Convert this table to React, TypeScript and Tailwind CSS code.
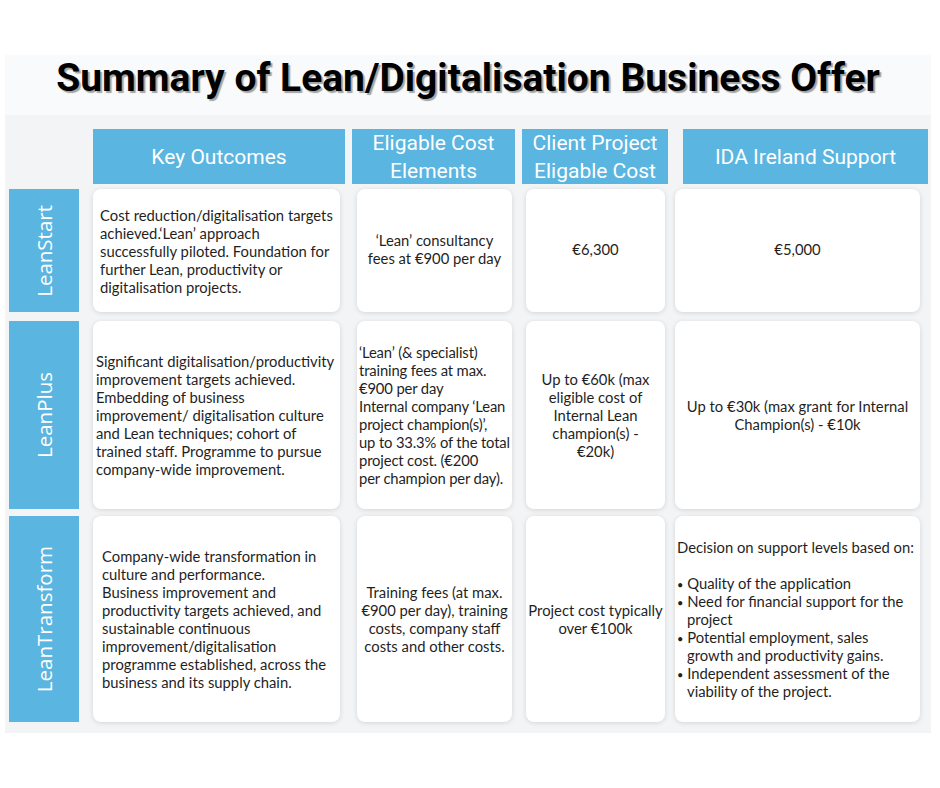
import React from "react"

const body = "font-['Lato','Noto_Sans',sans-serif] text-[14.8px] leading-[18px] text-[#1f1f1f]"
const cell = "bg-white rounded-[8px] shadow-[0_1px_5px_rgba(0,0,0,0.13)] flex overflow-hidden"

function Lines({ lines, className = "" }: { lines: string[]; className?: string }) {
  return (
    <div className={className}>
      {lines.map((l, i) => (
        <div key={i} className="whitespace-nowrap">
          {l === "" ? "\u00a0" : l}
        </div>
      ))}
    </div>
  )
}

function Label({ text }: { text: string }) {
  return (
    <div className="w-[70px] shrink-0 bg-[#5ab5e1] flex items-center justify-center">
      <span className="[writing-mode:vertical-rl] rotate-180 text-white font-['Open_Sans',sans-serif] text-[20.5px] leading-none">
        {text}
      </span>
    </div>
  )
}

function Header({ w, lines }: { w: string; lines: string[] }) {
  return (
    <div className={`${w} h-full bg-[#5ab5e1] flex flex-col items-center justify-center text-white font-['Roboto',sans-serif] text-[21px] leading-[28px]`}>
      {lines.map((l) => (
        <div key={l} className="whitespace-nowrap">{l}</div>
      ))}
    </div>
  )
}

function Bullet({ first, rest }: { first: string; rest?: string }) {
  return (
    <>
      <div className="whitespace-nowrap h-[18px]">
        <span className="text-[11px]">•</span> {first}
      </div>
      {rest && <div className="whitespace-nowrap pl-[10px]">{rest}</div>}
    </>
  )
}

export default function App() {
  return (
    <div className="w-[940px] min-h-[788px] bg-white pt-[55px] pl-[5px]">
      <div className="w-[926px] bg-[#f3f4f6]">
        <div className="h-[60px] bg-[#f9fafb] flex items-center justify-center pb-[14px]">
          <h1 className="font-['Roboto',sans-serif] font-bold text-[39px] leading-none text-black [text-shadow:2px_2px_1px_rgba(0,0,0,0.35)]">
            Summary of Lean/Digitalisation Business Offer
          </h1>
        </div>

        <div className="pl-[4px] pt-[14px] pb-[11px]">
          {/* header row */}
          <div className="flex h-[55px] ml-[84px] gap-[7px]">
            <Header w="w-[252px]" lines={["Key Outcomes"]} />
            <Header w="w-[163px]" lines={["Eligable Cost", "Elements"]} />
            <Header w="w-[146px]" lines={["Client Project", "Eligable Cost"]} />
            <div className="w-px" />
            <Header w="w-[245px]" lines={["IDA Ireland Support"]} />
          </div>

          {/* LeanStart */}
          <div className={`flex h-[123px] mt-[5px] ${body}`}>
            <Label text="LeanStart" />
            <div className={`${cell} w-[247px] ml-[14px] items-center px-[7px]`}>
              <Lines
                lines={[
                  "Cost reduction/digitalisation targets",
                  "achieved.‘Lean’ approach",
                  "successfully piloted. Foundation for",
                  "further Lean, productivity or",
                  "digitalisation projects.",
                ]}
              />
            </div>
            <div className={`${cell} w-[155px] ml-[17px] items-center justify-center text-center pb-[3px]`}>
              <Lines lines={["‘Lean’ consultancy", "fees at €900 per day"]} />
            </div>
            <div className={`${cell} w-[139px] ml-[14px] items-center justify-center text-center pb-[3px]`}>
              <Lines lines={["€6,300"]} />
            </div>
            <div className={`${cell} w-[245px] ml-[10px] items-center justify-center text-center pb-[3px]`}>
              <Lines lines={["€5,000"]} />
            </div>
          </div>

          {/* LeanPlus */}
          <div className={`flex h-[188px] mt-[9px] ${body}`}>
            <Label text="LeanPlus" />
            <div className={`${cell} w-[247px] ml-[14px] items-center pl-[3px]`}>
              <Lines
                lines={[
                  "Significant digitalisation/productivity",
                  "improvement targets achieved.",
                  "Embedding of business",
                  "improvement/ digitalisation culture",
                  "and Lean techniques; cohort of",
                  "trained staff. Programme to pursue",
                  "company-wide improvement.",
                ]}
              />
            </div>
            <div className={`${cell} w-[155px] ml-[17px] items-center pl-[2px] tracking-[-0.01em]`}>
              <Lines
                lines={[
                  "‘Lean’ (& specialist)",
                  "training fees at max.",
                  "€900 per day",
                  "Internal company ‘Lean",
                  "project champion(s)’,",
                  "up to 33.3% of the total",
                  "project cost. (€200",
                  "per champion per day).",
                ]}
              />
            </div>
            <div className={`${cell} w-[139px] ml-[14px] items-center justify-center text-center`}>
              <Lines
                lines={[
                  "Up to €60k (max",
                  "eligible cost of",
                  "Internal Lean",
                  "champion(s) -",
                  "€20k)",
                ]}
              />
            </div>
            <div className={`${cell} w-[245px] ml-[10px] items-center justify-center text-center`}>
              <Lines lines={["Up to €30k (max grant for Internal", "Champion(s) - €10k"]} />
            </div>
          </div>

          {/* LeanTransform */}
          <div className={`flex h-[206px] mt-[7px] ${body}`}>
            <Label text="LeanTransform" />
            <div className={`${cell} w-[247px] ml-[14px] items-center pl-[9px]`}>
              <Lines
                lines={[
                  "Company-wide transformation in",
                  "culture and performance.",
                  "Business improvement and",
                  "productivity targets achieved, and",
                  "sustainable continuous",
                  "improvement/digitalisation",
                  "programme established, across the",
                  "business and its supply chain.",
                ]}
              />
            </div>
            <div className={`${cell} w-[155px] ml-[17px] items-center justify-center text-center`}>
              <Lines
                lines={[
                  "Training fees (at max.",
                  "€900 per day), training",
                  "costs, company staff",
                  "costs and other costs.",
                ]}
              />
            </div>
            <div className={`${cell} w-[139px] ml-[14px] items-center justify-center text-center`}>
              <Lines lines={["Project cost typically", "over €100k"]} />
            </div>
            <div className={`${cell} w-[245px] ml-[10px] items-start pl-[2px] pt-[22px]`}>
              <div>
                <div className="whitespace-nowrap">Decision on support levels based on:</div>
                <div>&nbsp;</div>
                <Bullet first="Quality of the application" />
                <Bullet first="Need for financial support for the" rest="project" />
                <Bullet first="Potential employment, sales" rest="growth and productivity gains." />
                <Bullet first="Independent assessment of the" rest="viability of the project." />
              </div>
            </div>
          </div>
        </div>
      </div>
    </div>
  )
}
